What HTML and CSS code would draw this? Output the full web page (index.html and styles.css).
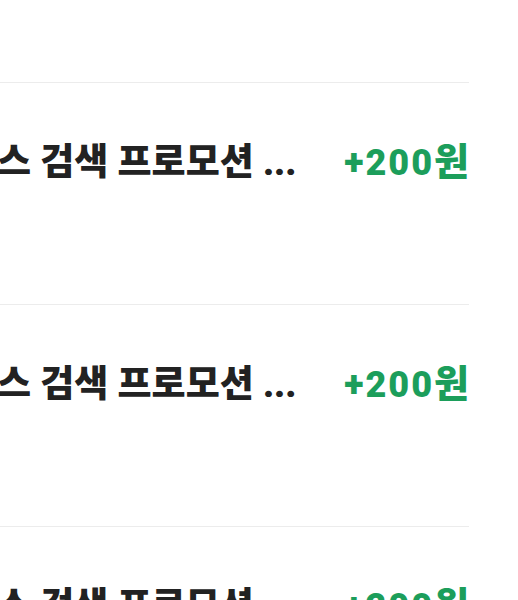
FILE: index.html
```html
<!DOCTYPE html>
<html lang="ko">
<head>
    <meta charset="UTF-8">
    <meta name="viewport" content="width=device-width, initial-scale=1.0">
    <title>적립 내역</title>
    <link rel="stylesheet" href="styles.css">
</head>
<body>
    <ul class="history">
        <li class="row">
            <span class="title">스 검색 프로모션 ...</span>
            <span class="amount">+200<span class="unit">원</span></span>
        </li>
        <li class="row">
            <span class="title">스 검색 프로모션 ...</span>
            <span class="amount">+200<span class="unit">원</span></span>
        </li>
        <li class="row">
            <span class="title">스 검색 프로모션 ...</span>
            <span class="amount">+200<span class="unit">원</span></span>
        </li>
    </ul>
</body>
</html>
```

FILE: styles.css
```css
body {
    margin: 0;
    font-family: Roboto, "Noto Sans CJK KR", sans-serif;
    background: #fff;
    color: #222;
    overflow: hidden;
}
.history {
    list-style: none;
    margin: 82px 49px 0 0;
    padding: 0;
}
.row {
    display: flex;
    align-items: center;
    gap: 46px;
    height: 48px;
    padding: 56px 0 117px;
    border-top: 1px solid #ececec;
}
.title {
    flex: 1;
    margin-left: -3px;
    font-family: Roboto, "Noto Sans CJK KR", sans-serif;
    font-size: 37px;
    font-weight: 900;
    line-height: 48px;
    white-space: nowrap;
    overflow: hidden;
}
.amount {
    flex-shrink: 0;
    font-size: 36px;
    font-weight: 900;
    line-height: 48px;
    letter-spacing: 2px;
    color: #1c9e5b;
}
.unit {
    font-family: "Noto Sans CJK KR", sans-serif;
    font-size: 38px;
    line-height: 1;
    letter-spacing: 0;
}
```
